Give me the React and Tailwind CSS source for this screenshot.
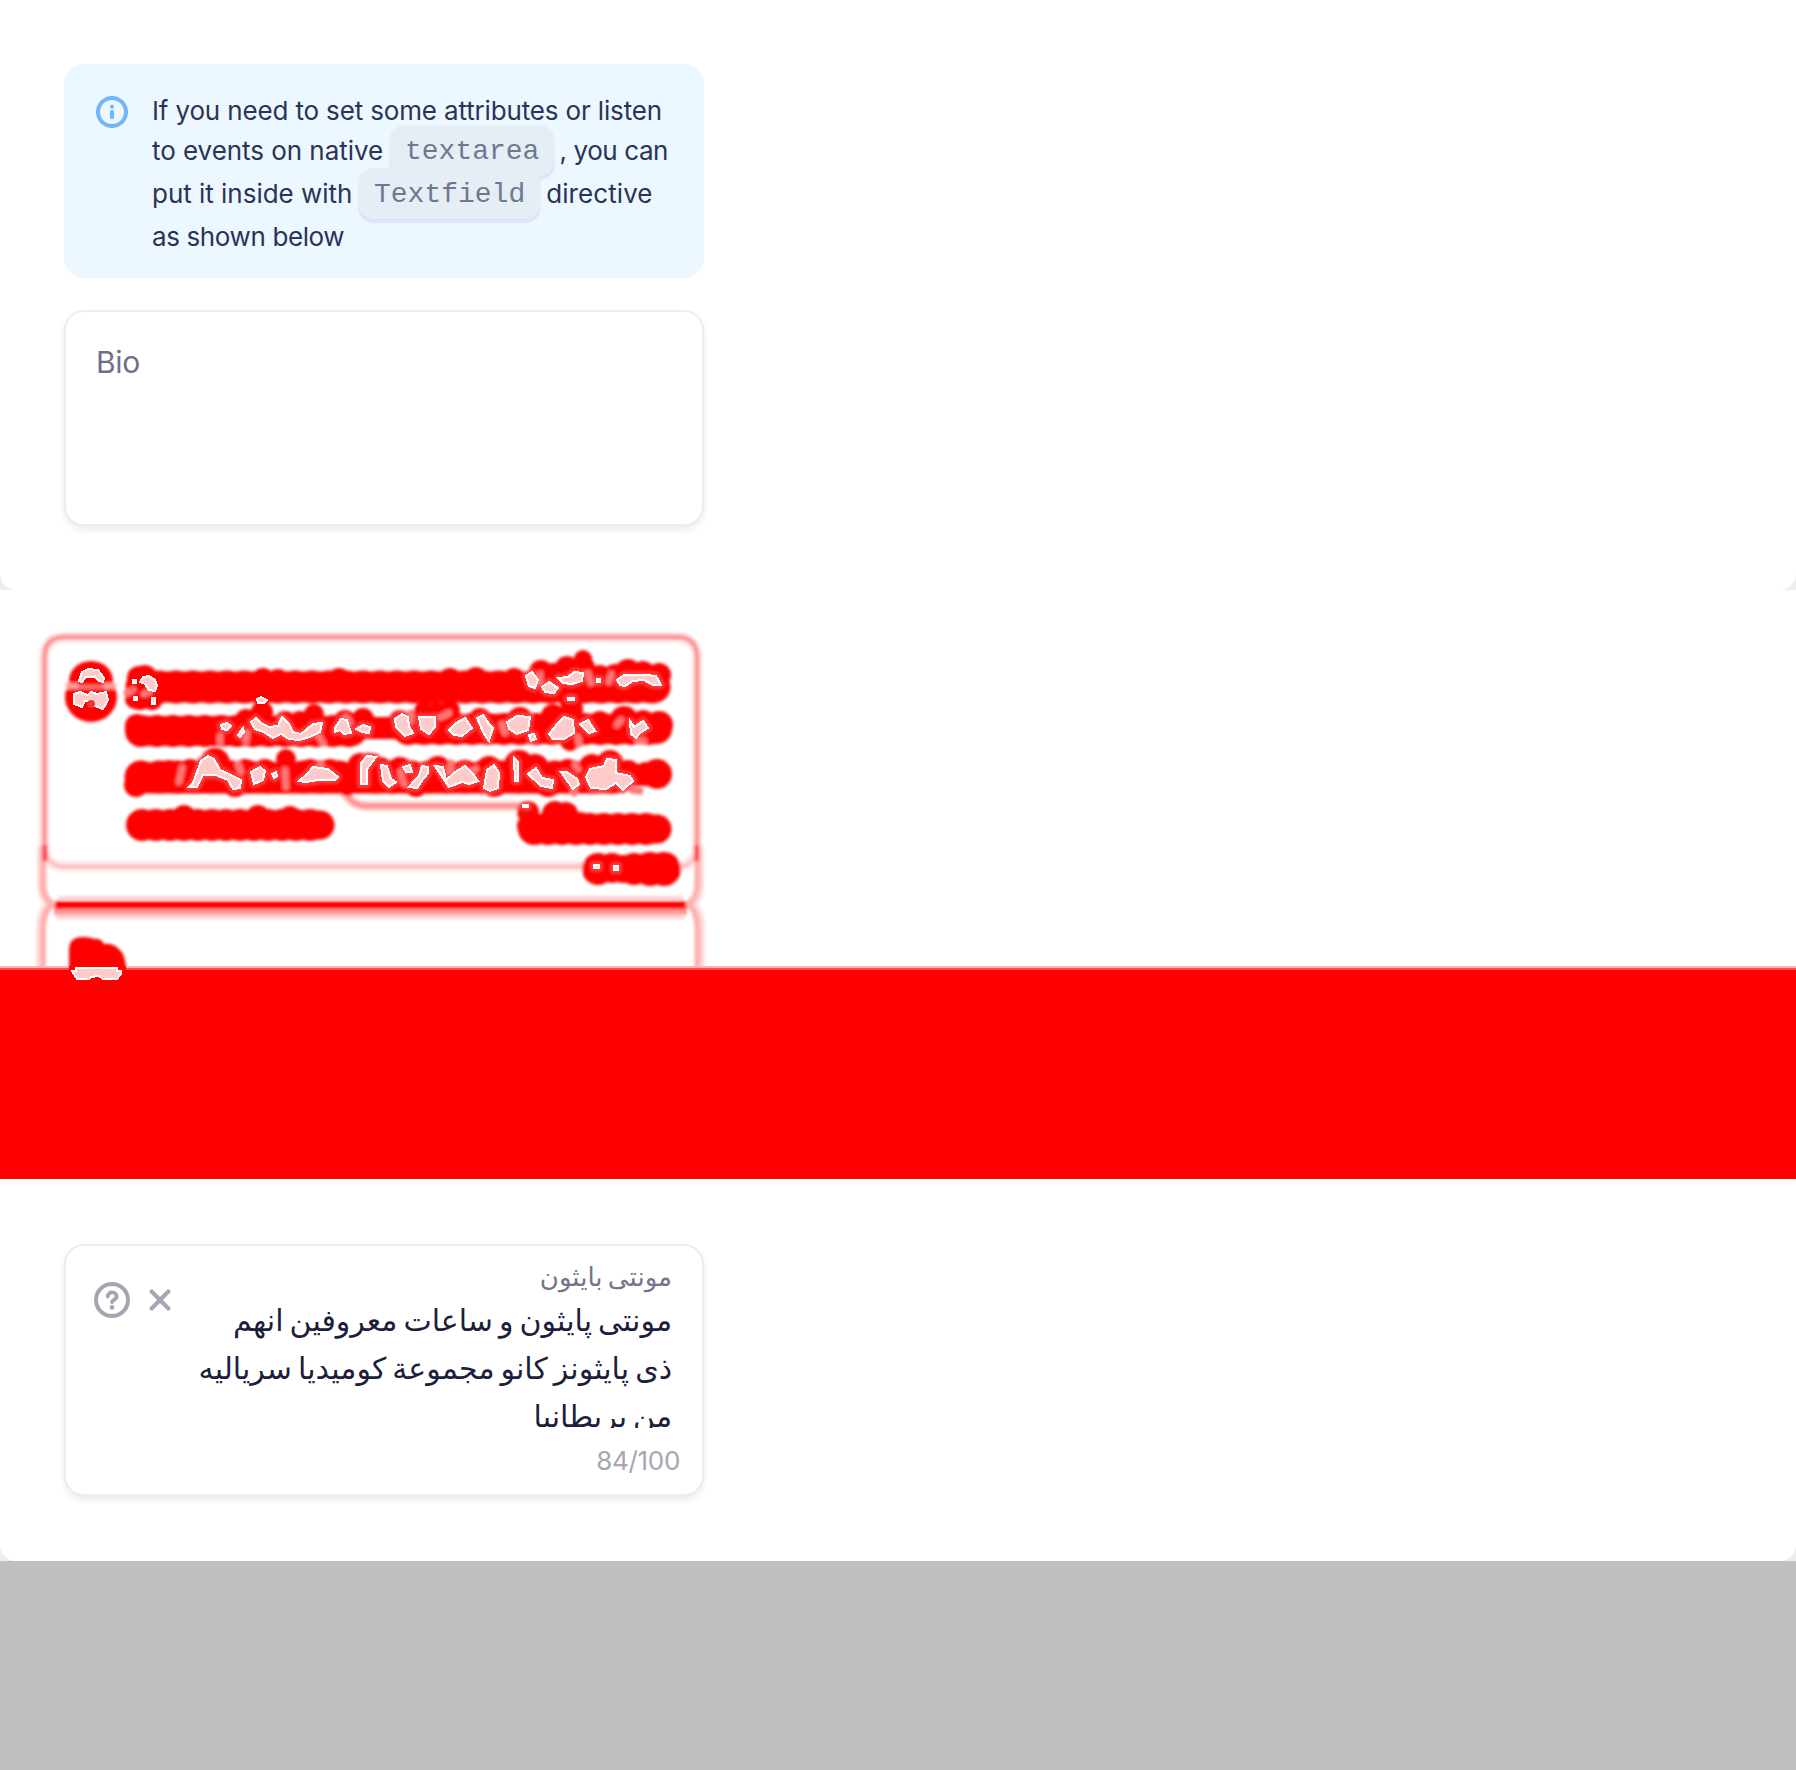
import React from "react";

const ink = "text-[#2b3456]";

function InfoIcon() {
  return (
    <svg className="mt-2 size-8 shrink-0" viewBox="0 0 32 32" fill="none">
      <circle cx="16" cy="16" r="14" stroke="#70b6f8" strokeWidth="4" />
      <circle cx="16" cy="10.7" r="2.1" fill="#70b6f8" />
      <path d="M16 16v5.2" stroke="#70b6f8" strokeWidth="4" strokeLinecap="round" />
    </svg>
  );
}

function Chip({ children }) {
  return (
    <code className="h-[51px] shrink-0 rounded-2xl bg-[#e5eef5] px-4 font-['Liberation_Mono',monospace] text-[28px] leading-[53px] text-[#6f7890] shadow-[0_4px_0_#dde5fd]">
      {children}
    </code>
  );
}

function Notice() {
  return (
    <div className={`flex h-[214px] w-[640px] rounded-[20px] bg-[#edf7ff] pl-8 pt-6 ${ink}`}>
      <InfoIcon />
      <div className="ml-6 mt-[2px] text-[26px] leading-[42px] whitespace-nowrap">
        <div className="h-10 tracking-[-0.15px]">If you need to set some attributes or listen</div>
        <div className="flex h-10 items-center">
          <span className="w-[237px] pt-0.5 tracking-[-0.05px]">to events on native</span>
          <span className="flex"><Chip>textarea</Chip></span>
          <span className="ml-1 pt-0.5 tracking-[-0.4px]">, you can</span>
        </div>
        <div className="flex h-[46px] items-center">
          <span className="w-[206px] pt-0.5 tracking-[-0.02px]">put it inside with</span>
          <span className="flex"><Chip>Textfield</Chip></span>
          <span className="ml-[5px] pt-0.5 tracking-[0.08px]">directive</span>
        </div>
        <div className="h-10 tracking-[-0.38px]">as shown below</div>
      </div>
    </div>
  );
}

const card = "w-[640px] rounded-[20px] border-2 border-[#ededed] bg-white shadow-[0_4px_6px_rgba(0,0,0,0.08)]";

const spots = [
  "M143 677l6-1 6 4 2 6-2 5-6-1-4-6-5-2z",
  "M257 699l4-2 6 3-3 3-6 0z",
  "M133 680h3v3h-3zM134 697h3v3h-3zM152 698h3v6h-3z",
  "M221 725l6-2 4 3-4 4-5-1z",
  "M238 735l5-7 1 4-4 5z",
  "M251 722l5-4 5 5 8 4 9-1 4-9 7 7 4 8 8 2 12-10 9-1-2 9-10 5-11 3-10-1-8-5-8 4-9-6-9-3z",
  "M335 728l6-9 6 1 4 13-7 1-4-4-5 2z",
  "M356 729l7-4 7 2-1 6-7-1z",
  "M193 783l8-22 7-5 6 3 6 11 9 4 12 6-1 8-7 1-5-9-12-5-13 0-6 12-8 0z",
  "M251 772l9-5 5 4-2 9-9 4z",
  "M272 774l4-2 1 4-3 2z",
  "M299 781l8-7 6-7 15 2 10 8-3 3-17 0-12 2z",
  "M361 763l6-7 9 1-6 8-3 4v15h-6z",
  "M526 676l6-4 6 8-3 8-6-2z",
  "M542 687l7-5 9 6-4 5-9-1z",
  "M558 678l10-1 6-5 9 1-1 8-10 3-9-1z",
  "M597 679h3v3h-3z",
  "M617 680l7-5 22 0 10 1 5 9-8 0-9-5-11 1-8 5-5-1z",
  "M395 719l7-5 6 3 1 10 4 6-8 3-9-9z",
  "M419 717h16v10l-6 7-8-5z",
  "M449 730l7-7 9-5 7 10-10 8-8-1z",
  "M477 718l6-3 6 9 4 4-4 13-5-7z",
  "M507 722l10-6 13 1-2 13-11 4-8-5z",
  "M529 735l5-1 2 5-5 2z",
  "M549 734l9-11 6-6 9 3 1 13-10 6-11 0z",
  "M580 724l8-4 7 11-6 2z",
  "M630 721l4 6 9-6 5 7-8 5-4 5-5-4z",
  "M381 765l6 1 4 13 5 3-7 5-6-6z",
  "M403 767l7-2 2 7-6 0z",
  "M422 766l6 1 0 6-7 9-4 6-8-1 4-5 6-6z",
  "M435 766l8 1 3 13 9-8 10-6 8 8 5 7-9 3-7-2-13 5z",
  "M484 788l3-18 7-5 5 8-1 15-8 3z",
  "M514 758l4 4 0 19-3 0z",
  "M528 774l8-6 6 10 11 2-1 8-11-2z",
  "M561 772l6 0 10 7 2 5-6 5-5-7z",
  "M586 777l4-8 14-3 3-7 9 1 0 13 14 3 3 5-10 9-7-7-10 6-15-1z",
  "M523 805h5v2h-5zM568 698h6v2h-6zM594 865h5v3h-5zM614 866h4v4h-4z",
  "M79 681l3-9 6-3 10 1 6 8-1 4-4-1-4-4-9 0-4 5z",
  "M74 694l6-2 8 3 3-3 6 2 9-2 2 8-5 9-8-3-4-5-6 0-3 6-8-3z",
  "M72 971h4v-3h41v3h4v3l-4 5h-14l-4-3-8 1-2 2h-12z",
];

const bumps = [
  [139, 678, 12], [145, 677, 12], [140, 698, 12], [152, 699, 11], [135, 699, 10], [263, 679, 11], [278, 680, 11], [339, 679, 11],
  [450, 680, 12], [476, 679, 12], [514, 679, 11], [541, 672, 12], [553, 674, 11], [567, 668, 12], [583, 659, 9], [583, 668, 12],
  [600, 677, 12], [615, 676, 12], [628, 672, 13], [643, 673, 12], [659, 675, 12], [570, 699, 11],
  [137, 726, 12], [262, 712, 11], [246, 720, 11], [285, 722, 11], [314, 714, 10], [300, 722, 11], [345, 721, 11], [363, 719, 11], [424, 711, 10], [437, 712, 10],
  [450, 710, 10], [400, 721, 11], [480, 719, 11], [520, 720, 13], [553, 716, 12], [572, 709, 11], [570, 741, 10], [600, 723, 12], [624, 720, 14], [643, 722, 12], [659, 725, 14],
  [136, 785, 12], [169, 771, 11], [190, 771, 12], [215, 763, 15], [245, 771, 12], [265, 771, 12], [286, 759, 10], [286, 770, 10], [310, 771, 12], [330, 771, 12], [347, 783, 13], [360, 765, 12],
  [380, 770, 13], [400, 770, 13], [416, 786, 11], [438, 769, 13], [465, 772, 12], [489, 769, 13], [519, 765, 15], [494, 784, 13], [535, 768, 14], [548, 784, 13],
  [568, 772, 13], [592, 767, 13], [610, 763, 13], [628, 773, 13], [645, 772, 10], [657, 774, 15], [235, 785, 12],
  [184, 817, 12], [258, 817, 12], [290, 817, 11], [528, 812, 11], [528, 826, 11], [555, 814, 13], [566, 814, 12], [545, 826, 13], [580, 825, 13], [635, 827, 12],
  [598, 869, 16], [612, 868, 15], [623, 869, 14], [634, 869, 16], [650, 869, 17], [664, 869, 17],
];

function DifferenceMap() {
  return (
    <svg className="block h-[589px] w-full" viewBox="0 590 1796 589" fill="none">
      <defs>
        <filter id="soft" x="0" y="590" width="1796" height="589" filterUnits="userSpaceOnUse">
          <feGaussianBlur stdDeviation="1.5" />
        </filter>
      </defs>
      <g filter="url(#soft)">
        <rect x="44" y="637.5" width="653" height="229" rx="18" stroke="#ffe9e9" strokeWidth="11" />
        <rect x="45" y="637.5" width="652" height="229" rx="18" stroke="#ffc0c0" strokeWidth="4.5" />
        <path d="M42 846V884q0 14 9 20Q41 912 41 928V968M699 846V884q0 14-9 20 10 8 10 24V968" stroke="#ffdcdc" strokeWidth="10" />
        <path d="M43 846V884q0 14 9 20Q43 912 43 928V968M697.500 846V884q0 14-9 20 9 8 9 24V968" stroke="#ffb0b0" strokeWidth="6" />
        <path d="M44.500 860V657q0-20 20-20H677q20 0 20 20V860" stroke="#ff9494" strokeWidth="5" />
        <path d="M45 845v16M696.500 845v16" stroke="#ff4a4a" strokeWidth="5" />
        <path d="M58 898H683" stroke="#ffd0d0" strokeWidth="4" />
        <path d="M54 909H687" stroke="#ff9494" strokeWidth="12" />
        <path d="M56 917H685" stroke="#ffd5d5" strokeWidth="5" />
        <path d="M55 905H686" stroke="#ff0000" strokeWidth="8" />
        <path d="M343 788q7 18 24 18H520" stroke="#ffdada" strokeWidth="11" />
        <path d="M343 788q7 18 24 18H520" stroke="#ff9494" strokeWidth="6" />
        <g stroke="#ff0505" strokeLinecap="round">
          <path d="M142 687H655" strokeWidth="31" />
          <path d="M142 687H655" strokeWidth="33" strokeDasharray="0 17" />
          <path d="M141 731H352M408 729H657" strokeWidth="30" />
          <path d="M141 731H352M408 729H657" strokeWidth="32" strokeDasharray="0 16" />
          <path d="M352 728H410" strokeWidth="22" />
          <path d="M141 778H615" strokeWidth="31" />
          <path d="M141 777H615" strokeWidth="33" strokeDasharray="0 18" />
          <path d="M610 775H655" strokeWidth="22" />
          <path d="M142 825H320M534 829H657" strokeWidth="29" />
          <path d="M142 825H320M534 829H657" strokeWidth="32" strokeDasharray="0 14" />
        </g>
        <g fill="#ff0505">
          {bumps.map(([x, y, r]) => (
            <circle key={`${x}-${y}`} cx={x} cy={y} r={r} />
          ))}
          <path d="M69 970V950q0-13 14-13 8 0 11 2 7-1 10 5 9-1 15 5 7 6 7 21z" />
          <ellipse cx="91" cy="681" rx="22" ry="20" />
          <ellipse cx="91" cy="697" rx="26" ry="25" />
        </g>
        <g stroke="#ff3a3a" strokeWidth="7" strokeLinejoin="round">
          {spots.slice(3, -3).map((d) => (
            <path key={d} d={d} />
          ))}
        </g>
        <path d="M66 686H78M104 686H116" stroke="#ff9c9c" strokeWidth="6" />
        <path d="M78 687H104" stroke="#ff7070" strokeWidth="4" />
        <g stroke="#ff7474" strokeWidth="7" strokeLinecap="round">
          <path d="M127 693l6-3M144 694l5-2M220 736v7M247 733l-1 8M282 720l6 8M318 735l5 8M346 717l4 5M182 768l-3 14M238 764l3 8M285 770l1 17M321 765l-4 7M411 713v8M441 717l8-4M505 733l-3-9M578 737l1 7M617 725l4-5M638 741h6M400 772l4 12M451 763l-1 9M575 765l3 4M470 772l6-3M588 673l3 10M611 674l-2 8M540 674v8M574 788v5M632 790l8 1" />
        </g>
      </g>
      <rect y="966" width="1796" height="2" fill="#ffb3b3" />
      <rect y="968" width="1796" height="2" fill="#ff4d4d" />
      <rect y="970" width="1796" height="209" fill="#ff0000" />
      <path d="M69 966H126V972H69z" fill="#ff0505" />
      <g fill="#ffcaca" stroke="#ffffff" strokeWidth="2" shapeRendering="crispEdges">
        {spots.map((d) => (
          <path key={d} d={d} />
        ))}
      </g>
      <circle cx="91" cy="704" r="4" fill="#e83838" />
    </svg>
  );
}

function BidiField() {
  return (
    <div className={`${card} flex h-[252px] justify-between pl-7 pt-[13px]`}>
      <div className="mt-[23px] flex h-9 items-center gap-3 text-[#a4a5b1]">
        <svg className="size-9" viewBox="0 0 36 36" fill="none" stroke="currentColor">
          <circle cx="18" cy="18" r="16" strokeWidth="4" />
          <path d="M13.8 14.6c0-5.8 8.8-5.6 8.8 0 0 3.5-4.6 3.3-4.6 5.400" strokeWidth="3.900" strokeLinecap="round" />
          <circle cx="18" cy="25.4" r="2.300" fill="currentColor" stroke="none" />
        </svg>
        <svg className="size-9" viewBox="0 0 36 36" fill="none" stroke="currentColor">
          <path d="M9.6 9.6 26.4 26.4M26.4 9.6 9.6 26.4" strokeWidth="4.2" strokeLinecap="round" />
        </svg>
      </div>
      <div className="mr-[30px] font-['DejaVu_Sans',sans-serif] whitespace-nowrap text-[#1b1f3b]" dir="rtl">
        <div className="h-9 text-[26px] leading-9 text-[#74758a] [word-spacing:-3px]">مونتى بايثون</div>
        <div className="h-[133px] overflow-hidden pt-0.5 text-[30px] leading-[48px] [word-spacing:-3.5px]">
          <div>مونتى پايثون و ساعات معروفين انهم</div>
          <div>ذى پايثونز كانو مجموعة كوميديا سرياليه</div>
          <div>من بريطانيا</div>
        </div>
        <div className="-mr-2 mt-[17px] text-right font-[Inter,sans-serif] text-[26px] leading-8 tracking-[-0.3px] text-[#a5a6b2]" dir="ltr">84/100</div>
      </div>
    </div>
  );
}

export default function App() {
  return (
    <main className="h-[1770px] w-[1796px] overflow-hidden bg-white font-[Inter,sans-serif]">
      <section className="h-[590px] bg-[#ededed]">
        <div className="flex h-full flex-col gap-8 rounded-b-2xl bg-white p-16">
          <Notice />
          <div className={`${card} h-[216px] px-[30px] pt-[26px] text-[30px] leading-[48px] tracking-[-0.3px] text-[#6e6f88]`}>Bio</div>
        </div>
      </section>
      <DifferenceMap />
      <section className="h-[382px] bg-[#ededed]">
        <div className="h-full rounded-b-2xl bg-white px-16 pt-[65px]">
          <BidiField />
        </div>
      </section>
      <div className="h-[209px] bg-[#bfbfbf]" />
    </main>
  );
}
